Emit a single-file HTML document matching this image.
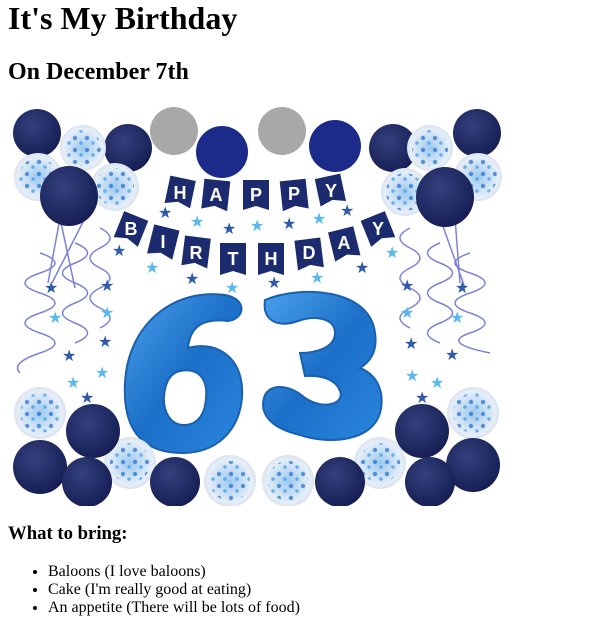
<!DOCTYPE html>
<html><head><meta charset="utf-8"><style>
body{margin:0 8px;font-family:"Liberation Serif",serif;background:#fff;color:#000}
h1{font-size:32px;margin:0 0 21px;line-height:37px}
h2{font-size:24px;margin:19px 0 20px;line-height:28px}
h3{font-size:18.72px;margin:17px 0 18px;line-height:22px}
ul{margin:17px 0;padding-left:40px;font-size:16px;line-height:18px}
svg{display:block}
</style></head><body>
<h1>It's My Birthday</h1>
<h2>On December 7th</h2>
<svg width="500" height="400" viewBox="8 103 500 400">
<defs>
<radialGradient id="d" cx="0.4" cy="0.35" r="0.7"><stop offset="0" stop-color="#34407e"/><stop offset="1" stop-color="#141d52"/></radialGradient>
<radialGradient id="c" cx="0.5" cy="0.5" r="0.6"><stop offset="0" stop-color="#9cc9ef"/><stop offset="0.7" stop-color="#e6eef8"/><stop offset="1" stop-color="#c9d3e2"/></radialGradient>
<pattern id="cf" width="12" height="12" patternUnits="userSpaceOnUse"><circle cx="3" cy="3" r="2.2" fill="#1f6fd0"/><circle cx="9" cy="8" r="1.8" fill="#3f9ae8"/></pattern>
<linearGradient id="b" x1="0" y1="0" x2="1" y2="1"><stop offset="0" stop-color="#4aa0ea"/><stop offset="0.5" stop-color="#1b6fc8"/><stop offset="1" stop-color="#2b86de"/></linearGradient>
</defs>
<rect x="8" y="103" width="500" height="400" fill="#fff"/>
<g stroke="#5a64c8" stroke-width="1.5" fill="none" opacity="0.8">
<path d="M40 250 q30 10 0 20 q-30 10 0 20 q30 10 0 20 q-30 10 0 20 q30 10 0 20 q-30 10 -20 20"/>
<path d="M75 240 q25 10 0 20 q-25 10 0 20 q25 10 0 20 q-25 10 0 20 q25 10 0 20"/>
<path d="M100 225 q20 10 0 20 q-20 10 0 20 q20 10 0 20 q-20 10 0 20 q20 10 0 20"/>
<path d="M410 225 q-20 10 0 20 q20 10 0 20 q-20 10 0 20 q20 10 0 20 q-20 10 0 20"/>
<path d="M440 240 q-25 10 0 20 q25 10 0 20 q-25 10 0 20 q25 10 0 20 q-25 10 0 20"/>
<path d="M470 250 q-30 10 0 20 q30 10 0 20 q-30 10 0 20 q30 10 0 20 q-30 10 20 20"/>
<path d="M60 215 L48 280 M60 215 L75 285 M85 215 L52 280 M455 215 L460 280 M440 215 L465 285"/>
</g>
<g fill="url(#d)">
<circle cx="37" cy="130" r="24"/><circle cx="128" cy="145" r="24"/><circle cx="477" cy="130" r="24"/><circle cx="393" cy="145" r="24"/>
</g>
<g><g fill="url(#c)"><circle cx="83" cy="145" r="23"/><circle cx="38" cy="174" r="24"/><circle cx="115" cy="184" r="24"/><circle cx="430" cy="145" r="23"/><circle cx="405" cy="189" r="24"/><circle cx="478" cy="174" r="24"/></g>
<g fill="url(#cf)" opacity="0.7"><circle cx="83" cy="145" r="18"/><circle cx="38" cy="174" r="19"/><circle cx="115" cy="184" r="19"/><circle cx="430" cy="145" r="18"/><circle cx="405" cy="189" r="19"/><circle cx="478" cy="174" r="19"/></g></g>
<g fill="url(#d)"><ellipse cx="69" cy="193" rx="29" ry="30"/><ellipse cx="445" cy="194" rx="29" ry="30"/></g>
<circle cx="174" cy="128" r="24" fill="#a8a8a8"/><circle cx="282" cy="128" r="24" fill="#a8a8a8"/>
<circle cx="222" cy="149" r="26" fill="#1c2a8a"/><circle cx="335" cy="143" r="26" fill="#1c2a8a"/>
<g fill="#1c2b6e" font-family="Liberation Sans,sans-serif" font-weight="bold" font-size="18" text-anchor="middle">
<path d="M167 175h26v28l-13-4-13 4z" transform="rotate(12 180 190)"/>
<path d="M203 177h26v30l-13-4-13 4z" transform="rotate(6 216 190)"/>
<path d="M243 177h26v30l-13-4-13 4z"/>
<path d="M281 177h26v30l-13-4-13 4z" transform="rotate(-6 294 190)"/>
<path d="M318 173h26v28l-13-4-13 4z" transform="rotate(-12 331 190)"/>
<path d="M118 212h26v28l-13-4-13 4z" transform="rotate(22 131 226)"/>
<path d="M150 224h26v30l-13-4-13 4z" transform="rotate(14 163 240)"/>
<path d="M183 234h26v30l-13-4-13 4z" transform="rotate(7 196 250)"/>
<path d="M220 240h26v32l-13-4-13 4z"/>
<path d="M258 240h26v32l-13-4-13 4z"/>
<path d="M296 236h26v30l-13-4-13 4z" transform="rotate(-7 309 250)"/>
<path d="M331 226h26v30l-13-4-13 4z" transform="rotate(-14 344 240)"/>
<path d="M365 212h26v28l-13-4-13 4z" transform="rotate(-22 378 226)"/>
<g fill="#fff"><text x="180" y="196">H</text><text x="216" y="198">A</text><text x="256" y="198">P</text><text x="294" y="197">P</text><text x="331" y="194">Y</text>
<text x="131" y="232">B</text><text x="163" y="245">I</text><text x="196" y="256">R</text><text x="233" y="262">T</text><text x="271" y="262">H</text><text x="309" y="256">D</text><text x="344" y="246">A</text><text x="378" y="232">Y</text></g>
</g>
<g fill="#2f5aa8" font-size="16" font-family="DejaVu Sans,sans-serif">
<text x="158" y="215">★</text><text x="222" y="231">★</text><text x="282" y="226">★</text><text x="340" y="213">★</text><text x="112" y="253">★</text><text x="185" y="281">★</text><text x="267" y="285">★</text><text x="355" y="270">★</text><text x="44" y="290">★</text><text x="100" y="288">★</text><text x="62" y="358">★</text><text x="98" y="344">★</text><text x="400" y="288">★</text><text x="404" y="346">★</text><text x="445" y="357">★</text><text x="455" y="290">★</text><text x="80" y="400">★</text><text x="415" y="400">★</text></g>
<g fill="#5ab8ea" font-size="16" font-family="DejaVu Sans,sans-serif">
<text x="190" y="224">★</text><text x="250" y="228">★</text><text x="312" y="221">★</text><text x="145" y="270">★</text><text x="225" y="290">★</text><text x="310" y="280">★</text><text x="385" y="255">★</text><text x="48" y="320">★</text><text x="100" y="315">★</text><text x="66" y="385">★</text><text x="95" y="375">★</text><text x="400" y="315">★</text><text x="450" y="320">★</text><text x="405" y="378">★</text><text x="430" y="385">★</text></g>
<g fill="url(#b)" stroke="#1a5fb0" stroke-width="2">
<path d="M225 292 C175 285 128 320 125 380 C122 435 150 450 183 450 C222 450 244 420 242 385 C240 350 212 338 188 345 C190 322 205 315 228 318 C245 316 248 296 225 292 Z M180 368 C198 364 208 376 206 395 C205 412 197 422 184 422 C170 422 163 408 164 393 C165 380 170 370 180 368 Z" fill-rule="evenodd"/>
<path d="M265 297 C300 282 370 285 375 330 C378 350 368 360 360 365 C378 372 385 390 380 410 C372 438 330 442 300 432 C270 425 258 410 265 392 C272 380 290 382 305 395 C325 408 345 400 340 388 C336 376 320 372 305 373 L300 350 C315 350 335 345 335 330 C335 315 315 312 298 318 C278 325 262 318 265 297 Z"/>
</g>
<g fill="url(#c)"><circle cx="40" cy="410" r="26"/><circle cx="130" cy="460" r="26"/><circle cx="230" cy="478" r="26"/><circle cx="288" cy="478" r="26"/><circle cx="380" cy="460" r="26"/><circle cx="473" cy="410" r="26"/></g>
<g fill="url(#cf)" opacity="0.7"><circle cx="40" cy="410" r="20"/><circle cx="130" cy="460" r="20"/><circle cx="230" cy="478" r="20"/><circle cx="288" cy="478" r="20"/><circle cx="380" cy="460" r="20"/><circle cx="473" cy="410" r="20"/></g>
<g fill="url(#d)"><circle cx="93" cy="428" r="27"/><circle cx="40" cy="464" r="27"/><circle cx="87" cy="479" r="25"/><circle cx="175" cy="479" r="25"/><circle cx="340" cy="479" r="25"/><circle cx="422" cy="428" r="27"/><circle cx="473" cy="462" r="27"/><circle cx="430" cy="479" r="25"/></g>
</svg>
<h3>What to bring:</h3>
<ul><li>Baloons (I love baloons)</li><li>Cake (I'm really good at eating)</li><li>An appetite (There will be lots of food)</li></ul>
</body></html>
